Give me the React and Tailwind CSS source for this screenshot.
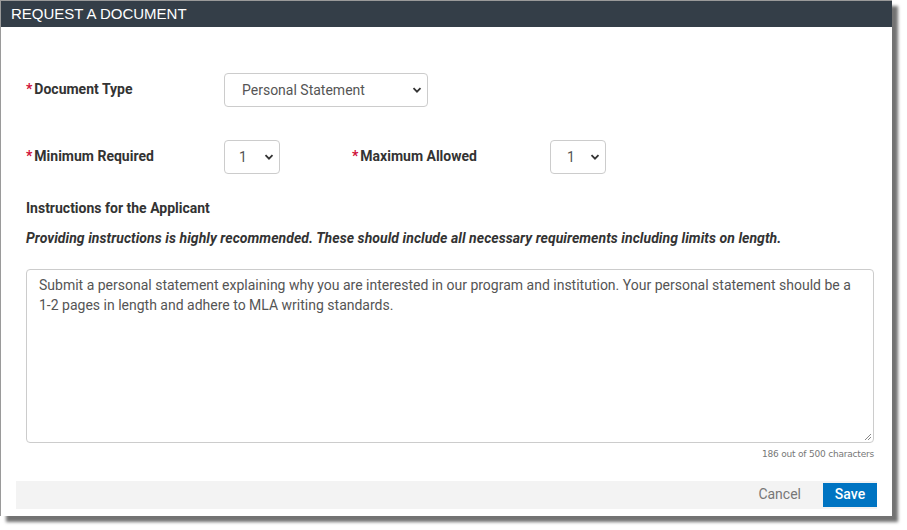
import React from 'react';

const Chevron = () => (
  <svg width="10" height="10" viewBox="0 0 10 10" className="shrink-0">
    <path d="M1.5 3.2 L5 6.7 L8.5 3.2" fill="none" stroke="#333" strokeWidth="1.8" />
  </svg>
);

const FakeSelect = ({ value, className }) => (
  <div className={`flex items-center justify-between h-[34px] border border-[#cccccc] rounded-[4px] bg-white text-[14px] text-[#555] ${className}`}>
    <span>{value}</span>
    <Chevron />
  </div>
);

const Label = ({ children }) => (
  <div className="w-[198px] shrink-0 flex items-center text-[14px] font-bold text-[#333] -translate-y-[1px]">
    <span className="text-[#d0103a] mr-[2px] text-[14px] leading-none">*</span>
    {children}
  </div>
);

export default function App() {
  return (
    <div className="w-[907px] h-[530px] bg-white font-['Roboto',sans-serif]">
      <div className="w-[892px] h-[516px] border-t border-l border-[#9a9a9a] bg-white shadow-[6px_6px_3px_rgba(0,0,0,0.55)] flex flex-col">
        <div className="h-[26px] bg-[#343e48] flex items-center pl-[10px] font-['Liberation_Sans',Arial,sans-serif] text-[15px] text-white">
          REQUEST A DOCUMENT
        </div>

        <div className="px-[25px] pt-[46px]">
          <div className="flex items-center">
            <Label>Document Type</Label>
            <FakeSelect value="Personal Statement" className="w-[204px] pl-[17px] pr-[5px]" />
          </div>

          <div className="flex items-center mt-[33px]">
            <Label>Minimum Required</Label>
            <FakeSelect value="1" className="w-[56px] pl-[14px] pr-[5px]" />
            <div className="w-[72px]" />
            <Label>Maximum Allowed</Label>
            <FakeSelect value="1" className="w-[56px] pl-[16px] pr-[5px]" />
          </div>

          <div className="mt-[25px] text-[14px] font-bold text-[#333] leading-[18px]">
            Instructions for the Applicant
          </div>
          <div className="mt-[12px] text-[14px] font-bold italic text-[#333] leading-[18px] tracking-[0.06px]">
            Providing instructions is highly recommended. These should include all necessary requirements including limits on length.
          </div>

          <div className="mt-[22px] w-[848px] h-[174px] border border-[#cccccc] rounded-[4px] px-[12px] py-[5px] text-[14px] leading-[20px] text-[#555] relative">
            Submit a personal statement explaining why you are interested in our program and institution. Your personal statement should be a 1-2 pages in length and adhere to MLA writing standards.
            <svg width="8" height="8" viewBox="0 0 8 8" className="absolute right-[1px] bottom-[1px]">
              <path d="M7 1 L1 7 M7 4 L4 7" stroke="#888" strokeWidth="1" />
            </svg>
          </div>
          <div className="w-[848px] text-right text-[9px] text-[#777] mt-[5px] font-['DejaVu_Sans',sans-serif] tracking-[-0.2px]">
            186 out of 500 characters
          </div>
        </div>

        <div className="mt-[19px] mx-[15px] h-[28px] bg-[#f3f3f3] flex items-center justify-end">
          <span className="text-[14px] text-[#777] mr-[22px]">Cancel</span>
          <button className="h-[24px] w-[54px] bg-[#0074c2] text-white text-[14px] font-medium">Save</button>
        </div>
      </div>
    </div>
  );
}
